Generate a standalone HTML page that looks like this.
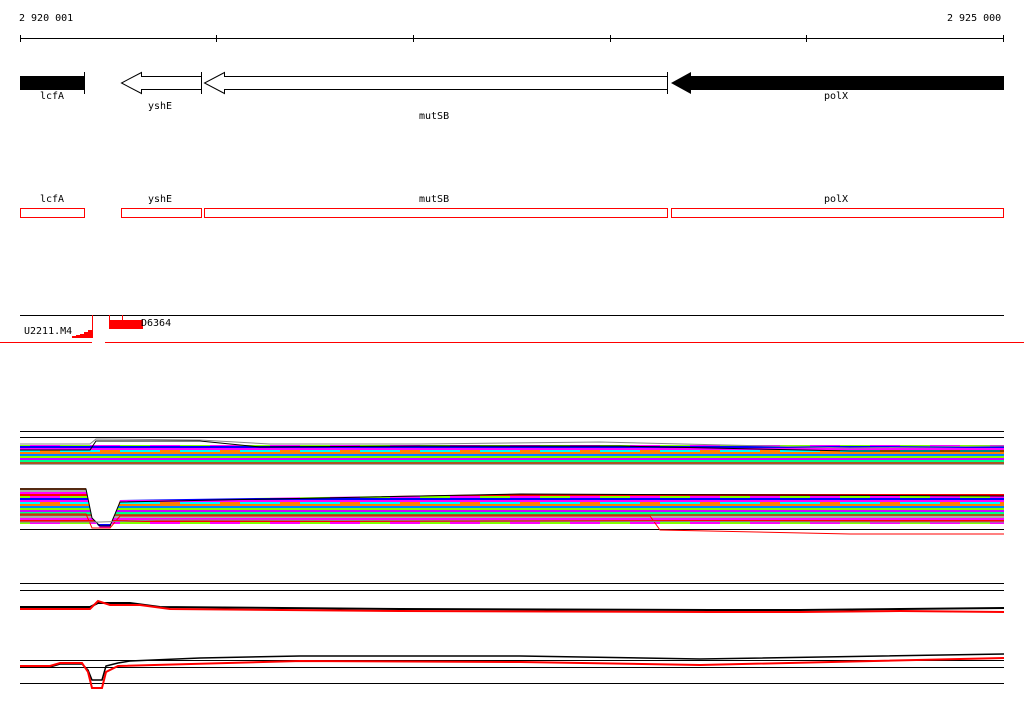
<!DOCTYPE html>
<html><head><style>
body{margin:0;background:#fff;width:1024px;height:714px;overflow:hidden;position:relative;font-family:"DejaVu Sans Mono","Liberation Mono",monospace;font-size:10px;}
.t{position:absolute;white-space:nowrap;line-height:10px}
</style></head><body>
<div class="t" style="left:19px;top:14px">2 920 001</div>
<div class="t" style="left:947px;top:14px">2 925 000</div>
<svg width="1024" height="714" style="position:absolute;left:0;top:0" shape-rendering="crispEdges">
<g stroke="#000" stroke-width="1" fill="none">
<line x1="20" y1="38.5" x2="1004" y2="38.5"/>
<path d="M20.5 35v7M216.5 35v7M413.5 35v7M610.5 35v7M806.5 35v7M1003.5 35v7"/>
</g>
<rect x="20" y="76" width="64" height="14" fill="#000"/>
<line x1="84.5" y1="72" x2="84.5" y2="94" stroke="#000"/>
<path d="M201.5 76.5H141.5V72.5L121.5 83L141.5 93.5V89.5H201.5" fill="#fff" stroke="#000" shape-rendering="auto"/>
<line x1="201.5" y1="72" x2="201.5" y2="94" stroke="#000"/>
<path d="M667.5 76.5H224.5V72.5L204.5 83L224.5 93.5V89.5H667.5" fill="#fff" stroke="#000" shape-rendering="auto"/>
<line x1="667.5" y1="72" x2="667.5" y2="94" stroke="#000"/>
<path d="M1004 76H691V72L671 83L691 94V90H1004Z" fill="#000" shape-rendering="auto"/>
<g fill="none" stroke="#f00">
<rect x="20.5" y="208.5" width="64" height="9"/>
<rect x="121.5" y="208.5" width="80" height="9"/>
<rect x="204.5" y="208.5" width="463" height="9"/>
<rect x="671.5" y="208.5" width="332" height="9"/>
</g>
<line x1="20" y1="315.5" x2="1004" y2="315.5" stroke="#000"/>
<path d="M72 338H92V330H88V332H84V334H80V335H76V336H72Z" fill="#f00"/>
<line x1="92.5" y1="315" x2="92.5" y2="338" stroke="#f00"/>
<line x1="0" y1="342.5" x2="92" y2="342.5" stroke="#f00"/>
<line x1="105" y1="342.5" x2="1024" y2="342.5" stroke="#f00"/>
<rect x="109" y="320" width="34" height="9" fill="#f00"/>
<line x1="109.5" y1="315" x2="109.5" y2="329" stroke="#f00"/>
<line x1="122.5" y1="315" x2="122.5" y2="321" stroke="#f00"/>
<defs>
<pattern id="st" width="60" height="26" patternUnits="userSpaceOnUse">
<rect width="60" height="2" y="0" fill="#f00"/><rect width="30" height="2" y="2" fill="#80ff00"/><rect x="30" width="30" height="2" y="2" fill="#f0f"/><rect width="60" height="2" y="4" fill="#00f"/><rect width="60" height="2" y="6" fill="#f0f"/><rect width="40" height="2" y="8" fill="#0ff"/><rect x="40" width="20" height="2" y="8" fill="#ff8000"/><rect width="60" height="2" y="10" fill="#ff8000"/><rect width="60" height="2" y="12" fill="#0080ff"/><rect width="60" height="2" y="14" fill="#80ff00"/><rect width="60" height="2" y="16" fill="#c0f"/><rect width="60" height="2" y="18" fill="#0f8"/><rect width="60" height="2" y="20" fill="#a52"/><rect width="60" height="2" y="22" fill="#aaa"/><rect width="60" height="2" y="24" fill="#f0f"/>
</pattern>
</defs>
<g stroke="#000"><line x1="20" y1="431.5" x2="1004" y2="431.5"/><line x1="20" y1="437.5" x2="1004" y2="437.5"/><line x1="20" y1="529.5" x2="1004" y2="529.5"/></g>
<rect x="20" y="445" width="984" height="20" fill="url(#st)"/>
<path d="M20 450H90L96 441L200 441L260 447L420 446L620 446L850 451H1004" stroke="#000" fill="none" shape-rendering="auto"/>
<path d="M20 444H90L96 439L200 440L270 444L420 444L600 442L850 448L1004 446" stroke="#888" fill="none" shape-rendering="auto"/>
<path d="M20 488H86L92 518L100 528H110L120 500L520 494H1004V524H20Z" fill="url(#st)" shape-rendering="auto"/>
<path d="M20 489H86L92 518L100 526H110L120 502L520 494L1004 496" stroke="#000" fill="none" shape-rendering="auto"/>
<path d="M20 514H86L92 528H110L120 516H650L660 530L850 534H1004" stroke="#f00" fill="none" shape-rendering="auto"/>
<path d="M20 522H86L100 522L160 520L500 521L900 522H1004" stroke="#888" fill="none" shape-rendering="auto"/>
<g stroke="#000"><line x1="20" y1="583.5" x2="1004" y2="583.5"/><line x1="20" y1="590.5" x2="1004" y2="590.5"/><line x1="20" y1="683.5" x2="1004" y2="683.5"/><line x1="20" y1="660.5" x2="1004" y2="660.5"/><line x1="20" y1="667.5" x2="1004" y2="667.5"/></g>
<g fill="none" shape-rendering="auto">
<path d="M20 607H90L98 603H130L160 607L400 609L710 610H800L900 609L1004 608" stroke="#000" stroke-width="2"/>
<path d="M20 609H90L98 601L110 605H140L170 609L400 611L710 612H800L900 611L1004 612" stroke="#f00" stroke-width="2"/>
<path d="M20 667H50L60 664H82L88 670L92 680H102L106 666L118 663L130 661L200 658L300 656H520L700 659L1004 654" stroke="#000" stroke-width="1.5"/>
<path d="M20 666H50L60 663H82L88 672L92 688H102L106 672L118 666L300 661L520 662L700 665L1004 658" stroke="#f00" stroke-width="2"/>
</g>
</svg>
<div class="t" style="left:40px;top:92px">lcfA</div>
<div class="t" style="left:148px;top:102px">yshE</div>
<div class="t" style="left:419px;top:112px">mutSB</div>
<div class="t" style="left:824px;top:92px">polX</div>
<div class="t" style="left:40px;top:195px">lcfA</div>
<div class="t" style="left:148px;top:195px">yshE</div>
<div class="t" style="left:419px;top:195px">mutSB</div>
<div class="t" style="left:824px;top:195px">polX</div>
<div class="t" style="left:24px;top:327px">U2211.M4</div>
<div class="t" style="left:141px;top:319px">D6364</div>
</body></html>
